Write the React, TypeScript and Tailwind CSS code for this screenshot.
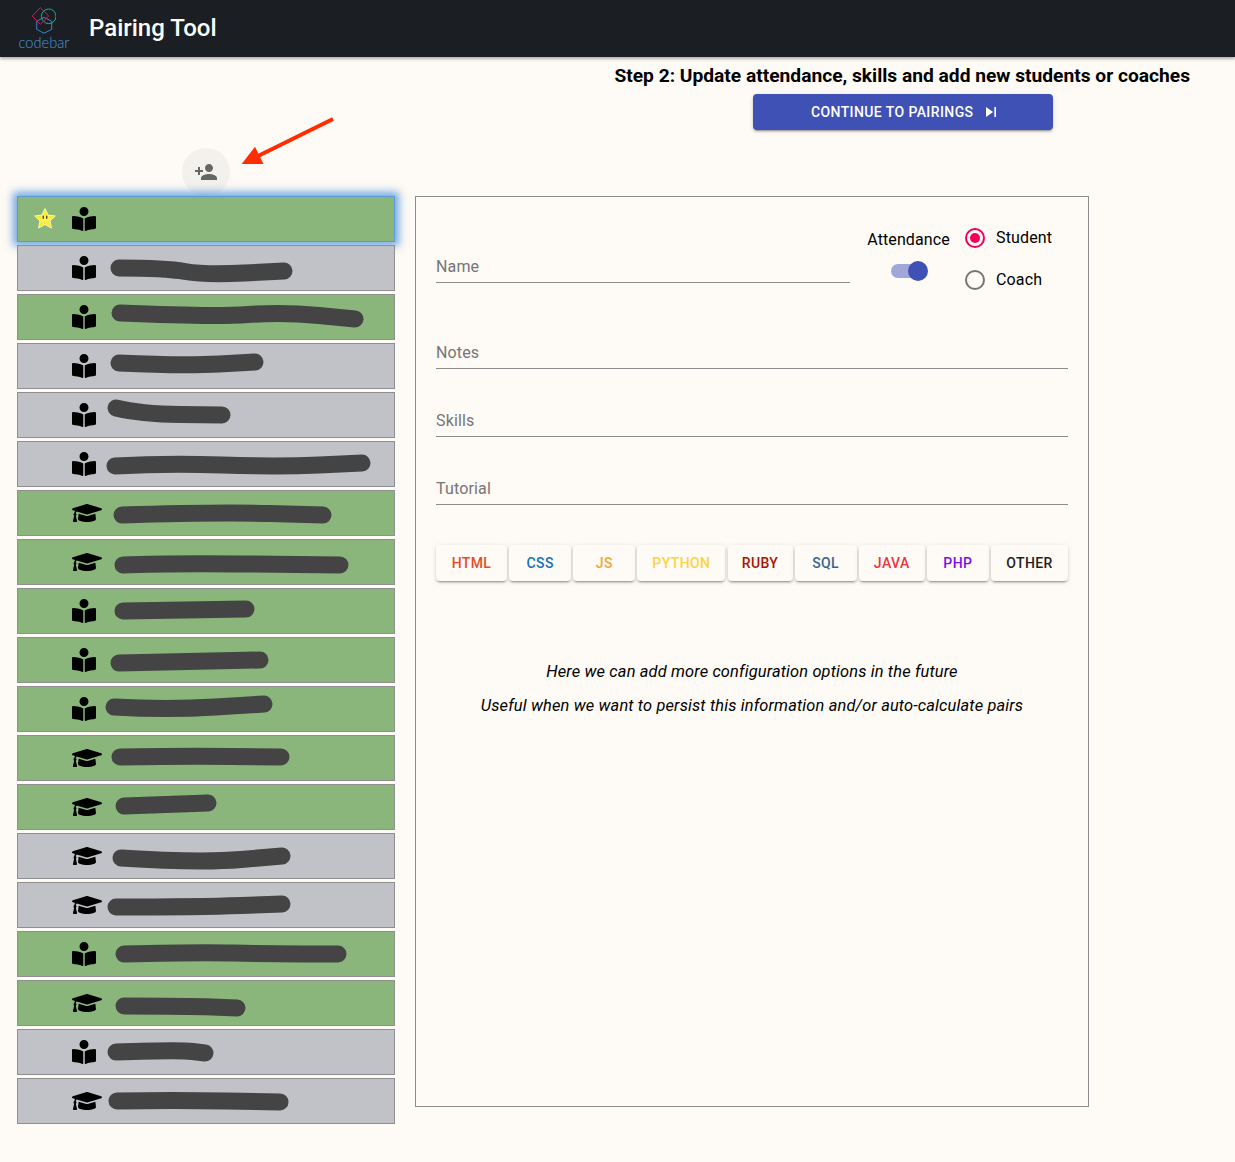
import React from "react";
import { FaBookReader, FaGraduationCap } from "react-icons/fa";

type Pt = [number, number];
type Row = { on: boolean; kind: "reader" | "cap"; top: number; stroke: Pt[]; star?: boolean };

const rows: Row[] = [
  { on: true, kind: "reader", top: 196, stroke: [], star: true },
  { on: false, kind: "reader", top: 245, stroke: [[119, 268], [165, 268], [205, 275], [284, 271]] },
  { on: true, kind: "reader", top: 294, stroke: [[120, 313], [213, 317], [283, 312], [355, 319]] },
  { on: false, kind: "reader", top: 343, stroke: [[119, 363], [183, 366], [255, 362]] },
  { on: false, kind: "reader", top: 392, stroke: [[116, 408], [140, 414], [222, 415]] },
  { on: false, kind: "reader", top: 441, stroke: [[115, 466], [167, 463], [277, 467], [362, 463]] },
  { on: true, kind: "cap", top: 490, stroke: [[122, 515], [217, 512], [323, 515]] },
  { on: true, kind: "cap", top: 539, stroke: [[123, 565], [167, 563], [340, 565]] },
  { on: true, kind: "reader", top: 588, stroke: [[123, 611], [246, 609]] },
  { on: true, kind: "reader", top: 637, stroke: [[119, 663], [260, 660]] },
  { on: true, kind: "reader", top: 686, stroke: [[114, 707], [167, 710], [264, 704]] },
  { on: true, kind: "cap", top: 735, stroke: [[120, 757], [183, 756], [281, 757]] },
  { on: true, kind: "cap", top: 784, stroke: [[124, 806], [208, 803]] },
  { on: false, kind: "cap", top: 833, stroke: [[121, 858], [200, 863], [282, 856]] },
  { on: false, kind: "cap", top: 882, stroke: [[116, 907], [200, 907], [282, 904]] },
  { on: true, kind: "reader", top: 931, stroke: [[124, 954], [200, 952], [267, 954], [338, 954]] },
  { on: true, kind: "cap", top: 980, stroke: [[124, 1006], [187, 1006], [237, 1008]] },
  { on: false, kind: "reader", top: 1029, stroke: [[116, 1052], [180, 1050], [205, 1053]] },
  { on: false, kind: "cap", top: 1078, stroke: [[117, 1101], [173, 1100], [280, 1102]] },
];

const smooth = (p: Pt[]) => {
  let d = `M${p[0][0]} ${p[0][1]}`;
  for (let i = 1; i < p.length - 1; i++) {
    const mx = (p[i][0] + p[i + 1][0]) / 2;
    const my = (p[i][1] + p[i + 1][1]) / 2;
    d += ` Q${p[i][0]} ${p[i][1]} ${mx} ${my}`;
  }
  const l = p[p.length - 1];
  d += ` L${l[0]} ${l[1]}`;
  return d;
};

const Star = () => (
  <svg width="24" height="24" viewBox="0 0 24 24">
    <defs>
      <radialGradient id="starFill" cx="50%" cy="55%" r="60%">
        <stop offset="0%" stopColor="#fff46a" />
        <stop offset="70%" stopColor="#f8e71c" />
        <stop offset="100%" stopColor="#d9b400" />
      </radialGradient>
    </defs>
    <path
      d="M12 1.5l3.1 6.6 7.2.9-5.3 4.9 1.4 7.1L12 17.5l-6.4 3.5L7 13.9 1.7 9l7.2-.9z"
      fill="url(#starFill)"
      stroke="#fbf7b5"
      strokeWidth="1"
      strokeLinejoin="round"
    />
    <rect x="9.6" y="8.5" width="1.4" height="3.4" rx="0.7" fill="#5a4a10" />
    <rect x="13" y="8.5" width="1.4" height="3.4" rx="0.7" fill="#5a4a10" />
  </svg>
);

const Logo = () => (
  <div className="flex flex-col items-center w-[50px] ml-[19px] mr-[20px] pt-[6px]">
    <svg width="24" height="28" viewBox="32 6 24 28" fill="none" strokeWidth="1">
      <path d="M44 17.3l7.7 4v8l-7.7 4-7.3-4v-8z" stroke="#3a85c8" />
      <circle cx="48.7" cy="16.3" r="7.3" stroke="#1fb08f" />
      <path d="M40.3 7.7l8.4 8.3-8.4 8.3-8-8.3z" stroke="#e0145f" />
    </svg>
    <span className="block mt-[2px] h-[14px] leading-[14px] text-[14.6px] font-light text-[#4a98dc] font-['Lato',sans-serif]">
      codebar
    </span>
  </div>
);

const Field = ({ label }: { label: string }) => (
  <div className="h-[32px] border-b border-[#8c8c8c] pb-[3px] flex items-end">
    <span className="leading-[24px] text-[16px] tracking-[0.15px] text-[#757575]">{label}</span>
  </div>
);

const langs: { t: string; c: string; w: string }[] = [
  { t: "HTML", c: "text-[#e44d26]", w: "w-[71px]" },
  { t: "CSS", c: "text-[#1572b6]", w: "w-[62px]" },
  { t: "JS", c: "text-[#f0a830]", w: "w-[62px]" },
  { t: "PYTHON", c: "text-[#ffd43b]", w: "w-[88px]" },
  { t: "RUBY", c: "text-[#a91401]", w: "w-[65px]" },
  { t: "SQL", c: "text-[#336791]", w: "w-[62px]" },
  { t: "JAVA", c: "text-[#ef3340]", w: "w-[66px]" },
  { t: "PHP", c: "text-[#7a0fe8]", w: "w-[62px]" },
  { t: "OTHER", c: "text-[#1f1f1f]", w: "w-[77px]" },
];

export default function App() {
  return (
    <div className="relative min-h-[1162px] bg-[#fefaf5] font-['Roboto',sans-serif] text-black overflow-hidden">
      <header className="h-[57px] bg-[#1b1f23] flex items-start shadow-[0_2px_3px_rgba(0,0,0,0.3)]">
        <Logo />
        <h1 className="text-[24px] leading-[56px] font-medium text-white">Pairing Tool</h1>
      </header>

      <div className="flex justify-end pr-[45px]">
        <div className="flex flex-col items-center">
          <h2 className="h-[37px] leading-[38px] text-[19.2px] font-bold whitespace-nowrap">
            Step 2: Update attendance, skills and add new students or coaches
          </h2>
          <button className="ml-[2px] w-[300px] h-[36px] pl-[6px] rounded bg-[#3f51b5] text-white text-[14px] font-medium tracking-[0.4px] flex items-center justify-center gap-[8px] shadow-[0_3px_1px_-2px_rgba(0,0,0,0.2),0_2px_2px_0_rgba(0,0,0,0.14),0_1px_5px_0_rgba(0,0,0,0.12)]">
            CONTINUE TO PAIRINGS
            <svg width="20" height="20" viewBox="0 0 24 24" fill="currentColor">
              <path d="M6 18l8.5-6L6 6v12zM16 6v12h2V6h-2z" />
            </svg>
          </button>
        </div>
      </div>

      <main className="flex gap-[20px] pl-[17px] pt-[18px] items-start">
        <div className="w-[378px] flex flex-col items-center">
          <button className="w-[48px] h-[48px] rounded-full bg-[#f3f1ee] flex items-center justify-center text-[#666666]">
            <svg width="24" height="24" viewBox="0 0 24 24" fill="currentColor">
              <path d="M15 12c2.21 0 4-1.79 4-4s-1.79-4-4-4-4 1.79-4 4 1.79 4 4 4zm-9-2V7H4v3H1v2h3v3h2v-3h3v-2H6zm9 4c-2.67 0-8 1.34-8 4v2h16v-2c0-2.66-5.33-4-8-4z" />
            </svg>
          </button>
          <ul className="w-full flex flex-col gap-[3px]">
            {rows.map((r, i) => (
              <li
                key={i}
                className={`relative h-[46px] border flex items-center pl-[15px] ${
                  r.on ? "bg-[#8ab67b]" : "bg-[#c1c2c7]"
                } ${
                  r.star
                    ? "border-[#5b9bd5] shadow-[0_0_8px_4px_rgba(66,140,220,0.75)]"
                    : "border-[#8f8f8f]"
                }`}
              >
                <span className="w-[39px] flex items-center">{r.star && <Star />}</span>
                {r.kind === "reader" ? (
                  <FaBookReader className="w-[24px] h-[24px] text-black" />
                ) : (
                  <FaGraduationCap className="w-[30px] h-[24px] text-black" />
                )}
                {r.stroke.length > 0 && (
                  <svg className="absolute left-0 top-0 w-full h-full overflow-visible" fill="none">
                    <path
                      d={smooth(r.stroke.map(([x, y]) => [x - 18, y - r.top - 1] as Pt))}
                      stroke="#444444"
                      strokeWidth="17"
                      strokeLinecap="round"
                      strokeLinejoin="round"
                    />
                  </svg>
                )}
              </li>
            ))}
          </ul>
        </div>

        <section className="mt-[48px] w-[674px] h-[911px] border border-[#8c8c8c] px-[20px] pt-[20px]">
          <div className="flex items-start h-[84px]">
            <div className="w-[414px] mt-[34px]">
              <Field label="Name" />
            </div>
            <div className="ml-[17px] w-[83px] pt-[11px] flex flex-col items-center">
              <span className="leading-[24px] text-[16px] tracking-[0.1px] whitespace-nowrap">Attendance</span>
              <div className="relative mt-[12px] mr-[2px] w-[34px] h-[14px] rounded-full bg-[#a0a8d9]">
                <span className="absolute -top-[3px] -right-[3px] w-[20px] h-[20px] rounded-full bg-[#3f51b5]" />
              </div>
            </div>
            <div className="ml-[15px] flex flex-col">
              <label className="h-[42px] flex items-center gap-[11px]">
                <span className="w-[20px] h-[20px] rounded-full border-2 border-[#f50057] flex items-center justify-center">
                  <span className="w-[10px] h-[10px] rounded-full bg-[#f50057]" />
                </span>
                <span className="text-[16px] tracking-[0.15px]">Student</span>
              </label>
              <label className="h-[42px] flex items-center gap-[11px]">
                <span className="w-[20px] h-[20px] rounded-full border-2 border-[#757575]" />
                <span className="text-[16px] tracking-[0.15px]">Coach</span>
              </label>
            </div>
          </div>

          <div className="mt-[36px] flex flex-col gap-[36px]">
            <Field label="Notes" />
            <Field label="Skills" />
            <Field label="Tutorial" />
          </div>

          <div className="mt-[40px] flex justify-between">
            {langs.map((l) => (
              <button
                key={l.t}
                className={`${l.w} ${l.c} h-[36px] rounded bg-[#fefaf5] text-[14px] font-medium tracking-[0.4px] shadow-[0_3px_1px_-2px_rgba(0,0,0,0.2),0_2px_2px_0_rgba(0,0,0,0.14),0_1px_5px_0_rgba(0,0,0,0.12)]`}
              >
                {l.t}
              </button>
            ))}
          </div>

          <div className="mt-[79px] text-center italic text-[16.4px] tracking-[0.15px]">
            <p className="leading-[24px]">Here we can add more configuration options in the future</p>
            <p className="mt-[10px] leading-[24px]">
              Useful when we want to persist this information and/or auto-calculate pairs
            </p>
          </div>
        </section>
      </main>

      <svg className="absolute left-[235px] top-[110px] pointer-events-none" width="105" height="60" viewBox="235 110 105 60">
        <path d="M333 119L256 157" stroke="#ff2d00" strokeWidth="4" fill="none" />
        <path d="M241.7 164L255 146.7L263.5 164z" fill="#ff2d00" />
      </svg>
    </div>
  );
}
